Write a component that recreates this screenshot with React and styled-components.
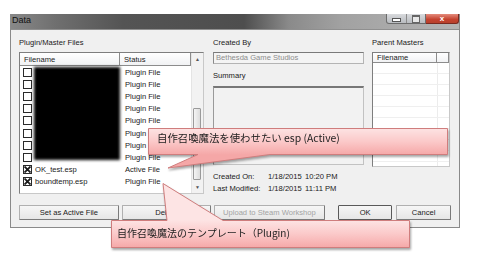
import React from "react";
import styled, { createGlobalStyle } from "styled-components";

const GlobalStyle = createGlobalStyle`
  html, body {
    margin: 0;
    background: #fff;
  }
  body {
    font-family: "Liberation Sans", Arial, sans-serif;
    font-size: 7.6px;
    color: #1a1a1a;
    -webkit-font-smoothing: antialiased;
  }
`;

const Page = styled.div`
  position: relative;
  width: 480px;
  height: 260px;
  padding: 14px 0 0 10px;
  box-sizing: border-box;
  overflow: hidden;
`;

const Window = styled.div`
  width: 450px;
  box-sizing: border-box;
  border: 1px solid #8a8a8a;
  border-top: none;
  background: #f0f0f0;
`;

const TitleBar = styled.div`
  height: 15px;
  display: flex;
  justify-content: space-between;
  align-items: flex-start;
  background: linear-gradient(
    90deg,
    #888 0%,
    #6f6f6f 10%,
    #545454 25%,
    #4e4e4e 52%,
    #8a8a8a 62%,
    #a2a2a2 74%,
    #b4b4b4 100%
  );
`;

const TitleText = styled.span`
  font-size: 9px;
  line-height: 12px;
  padding-left: 1px;
  color: #111;
`;

const Controls = styled.div`
  display: flex;
  height: 10px;
`;

const MinMax = styled.div`
  width: 40px;
  display: flex;
  border: 1px solid #6c6c6c;
  border-top: none;
  border-radius: 0 0 0 3px;
  box-sizing: border-box;
  background: linear-gradient(#d8dadd, #b9bcc0);
`;

const CtrlButton = styled.div`
  flex: 1;
  display: flex;
  align-items: center;
  justify-content: center;
  border-right: ${(p) => (p.$divider ? "1px solid #8a8a8a" : "none")};
`;

const MinGlyph = styled.div`
  width: 7px;
  height: 2px;
  margin-top: 3px;
  background: #fff;
  border: 1px solid #555;
`;

const MaxGlyph = styled.div`
  width: 6px;
  height: 5px;
  border: 1px solid #666;
  border-top-width: 2px;
  background: #e8e8e8;
`;

const Close = styled.div`
  width: 33px;
  display: flex;
  align-items: center;
  justify-content: center;
  border: 1px solid #7a2a20;
  border-top: none;
  border-left: none;
  border-radius: 0 0 3px 0;
  box-sizing: border-box;
  background: linear-gradient(#e48b7c, #c4422f 60%, #b8402c);
  color: #fff;
  font-size: 8px;
  font-weight: bold;
  line-height: 8px;
`;

const Body = styled.div`
  border-top: 1px solid #8f8f8f;
  padding: 8px 8px 7px 8px;
`;

const Columns = styled.div`
  display: flex;
  align-items: flex-start;
`;

const Column = styled.div`
  width: ${(p) => p.$w}px;
  margin-left: ${(p) => p.$gap || 0}px;
  display: flex;
  flex-direction: column;
`;

const Label = styled.div`
  line-height: 10px;
  height: 10px;
  margin-top: ${(p) => p.$mt || 0}px;
  white-space: nowrap;
`;

const ListBox = styled.div`
  position: relative;
  margin-top: 4px;
  height: ${(p) => p.$h}px;
  box-sizing: border-box;
  border: 1px solid #7e7e7e;
  border-right-color: #c8c8c8;
  border-bottom-color: #c8c8c8;
  background: #fff;
  display: flex;
  overflow: hidden;
`;

const Table = styled.div`
  flex: 1;
  display: flex;
  flex-direction: column;
`;

const HeaderRow = styled.div`
  display: flex;
  height: ${(p) => p.$h}px;
  box-sizing: border-box;
  border-bottom: 1px solid #8c8c8c;
  background: linear-gradient(#ffffff, #f1f2f4);
`;

const HeaderCell = styled.div`
  width: ${(p) => (p.$w ? `${p.$w}px` : "auto")};
  flex: ${(p) => (p.$w ? "none" : 1)};
  box-sizing: border-box;
  padding-left: 4px;
  display: flex;
  align-items: center;
  border-right: 1px solid #8c8c8c;
`;

const FileRow = styled.div`
  display: flex;
  height: 12.2px;
  align-items: center;
  color: #1a1a1a;
`;

const NameCell = styled.div`
  width: 100px;
  display: flex;
  align-items: center;
  padding-left: 3px;
  box-sizing: border-box;
  gap: 3px;
  white-space: nowrap;
`;

const StatusCell = styled.div`
  flex: 1;
  padding-left: 5px;
  white-space: nowrap;
  color: #1a1a1a;
`;

const Check = styled.div`
  width: 9px;
  height: 9px;
  box-sizing: border-box;
  border: 1px solid #2a2a2a;
  background: #fff;
  display: flex;
  flex: none;
`;

const Redaction = styled.div`
  position: absolute;
  left: 14px;
  top: 14px;
  width: 86px;
  height: 93px;
  background: #000;
  filter: blur(1.6px);
`;

const ScrollBar = styled.div`
  width: 11px;
  display: flex;
  flex-direction: column;
  background: #f2f2f2;
  border-left: 1px solid #e4e4e4;
`;

const ScrollArrow = styled.div`
  height: 12px;
  display: flex;
  align-items: center;
  justify-content: center;
  color: #555;
  font-size: 5px;
`;

const ScrollTrack = styled.div`
  flex: 1;
  padding-top: 43px;
`;

const Thumb = styled.div`
  width: 8px;
  height: 72px;
  margin-left: 1px;
  box-sizing: border-box;
  border: 1px solid #9a9a9a;
  border-radius: 1px;
  background: linear-gradient(90deg, #f4f4f4, #dcdcdc);
`;

const TextField = styled.div`
  margin-top: 4px;
  height: 12px;
  box-sizing: border-box;
  border: 1px solid #b4b4b4;
  border-top-color: #7a7a7a;
  border-left-color: #8a8a8a;
  background: #f4f4f4;
  color: #8d8d8d;
  padding-left: 2px;
  line-height: 10px;
  white-space: nowrap;
`;

const SummaryBox = styled.div`
  margin-top: 5px;
  height: 79px;
  box-sizing: border-box;
  border: 1px solid #c2c2c2;
  border-top: 2px solid #777;
  border-left-color: #9a9a9a;
  background: #f2f2f2;
`;

const InfoGrid = styled.div`
  margin-top: 6px;
  display: grid;
  grid-template-columns: 55px 37px auto;
  line-height: 12px;
  white-space: nowrap;
`;

const MasterRow = styled.div`
  display: flex;
  height: 10px;
  flex: none;
  border-bottom: 1px solid #efefef;
`;

const MasterCell = styled.div`
  width: ${(p) => (p.$w ? `${p.$w}px` : "auto")};
  flex: ${(p) => (p.$w ? "none" : 1)};
  border-right: ${(p) => (p.$w ? "1px solid #ececec" : "none")};
`;

const ButtonRow = styled.div`
  display: flex;
  margin-top: 10px;
`;

const Button = styled.div`
  width: ${(p) => p.$w}px;
  margin-left: ${(p) => p.$gap || 0}px;
  height: 15px;
  box-sizing: border-box;
  display: flex;
  align-items: center;
  justify-content: center;
  border: 1px solid ${(p) => (p.$default ? "#5a5a5a" : "#7a7a7a")};
  border-top-color: ${(p) => (p.$default ? "#5a5a5a" : "#b0b0b0")};
  border-left-color: ${(p) => (p.$default ? "#5a5a5a" : "#b0b0b0")};
  border-radius: 1px;
  background: linear-gradient(#f6f6f6, #e6e6e6);
  color: ${(p) => (p.$disabled ? "#a3a3a3" : "#1a1a1a")};
  white-space: nowrap;
`;

const CalloutWrap = styled.div`
  position: absolute;
  left: ${(p) => p.$x}px;
  top: ${(p) => p.$y}px;
  width: ${(p) => p.$w}px;
  height: ${(p) => p.$h}px;
  filter: drop-shadow(1.5px 2px 1.2px rgba(0, 0, 0, 0.35));
`;

const CalloutSvg = styled.svg`
  position: absolute;
  left: 0;
  top: 0;
`;

const CalloutText = styled.span`
  position: absolute;
  left: ${(p) => p.$tx}px;
  top: ${(p) => p.$ty}px;
  font-family: "Noto Sans CJK JP", "Noto Sans", sans-serif;
  font-size: ${(p) => p.$fs}px;
  line-height: 14px;
  color: #222;
  white-space: nowrap;
`;

const XMark = () => (
  <svg width="7" height="7" viewBox="0 0 7 7">
    <path d="M0.5 0.5 L6.5 6.5 M6.5 0.5 L0.5 6.5" stroke="#1a1a1a" strokeWidth="1.8" />
  </svg>
);

const Callout = ({ id, x, y, w, h, d, boxTop, boxBottom, tx, ty, fs, children }) => (
  <CalloutWrap $x={x} $y={y} $w={w} $h={h}>
    <CalloutSvg width={w} height={h}>
      <defs>
        <linearGradient id={id} x1="0" y1={boxTop} x2="0" y2={boxBottom} gradientUnits="userSpaceOnUse">
          <stop offset="0" stopColor="#fde4e4" />
          <stop offset="0.5" stopColor="#fbc9c9" />
          <stop offset="1" stopColor="#f5a7a7" />
        </linearGradient>
      </defs>
      <path d={d} fill={`url(#${id})`} stroke="#cf7d7d" strokeWidth="1" />
    </CalloutSvg>
    <CalloutText $tx={tx} $ty={ty} $fs={fs}>
      {children}
    </CalloutText>
  </CalloutWrap>
);

const files = [
  ...Array.from({ length: 8 }, () => ({ name: "", status: "Plugin File", checked: false })),
  { name: "OK_test.esp", status: "Active File", checked: true },
  { name: "boundtemp.esp", status: "Plugin File", checked: true },
];

export default function App() {
  return (
    <Page>
      <GlobalStyle />
      <Window>
        <TitleBar>
          <TitleText>Data</TitleText>
          <Controls>
            <MinMax>
              <CtrlButton $divider>
                <MinGlyph />
              </CtrlButton>
              <CtrlButton>
                <MaxGlyph />
              </CtrlButton>
            </MinMax>
            <Close>x</Close>
          </Controls>
        </TitleBar>
        <Body>
          <Columns>
            <Column $w={185}>
              <Label>Plugin/Master Files</Label>
              <ListBox $h={142}>
                <Table>
                  <HeaderRow $h={13}>
                    <HeaderCell $w={100}>Filename</HeaderCell>
                    <HeaderCell>Status</HeaderCell>
                  </HeaderRow>
                  {files.map((f, i) => (
                    <FileRow key={i}>
                      <NameCell>
                        <Check>{f.checked && <XMark />}</Check>
                        {f.name}
                      </NameCell>
                      <StatusCell>{f.status}</StatusCell>
                    </FileRow>
                  ))}
                </Table>
                <ScrollBar>
                  <ScrollArrow>▲</ScrollArrow>
                  <ScrollTrack>
                    <Thumb />
                  </ScrollTrack>
                  <ScrollArrow>▼</ScrollArrow>
                </ScrollBar>
                <Redaction />
              </ListBox>
            </Column>

            <Column $w={151} $gap={9}>
              <Label>Created By</Label>
              <TextField>Bethesda Game Studios</TextField>
              <Label $mt={7}>Summary</Label>
              <SummaryBox />
              <InfoGrid>
                <span>Created On:</span>
                <span>1/18/2015</span>
                <span>10:20 PM</span>
                <span>Last Modified:</span>
                <span>1/18/2015</span>
                <span>11:11 PM</span>
              </InfoGrid>
            </Column>

            <Column $w={78} $gap={8}>
              <Label>Parent Masters</Label>
              <ListBox $h={115}>
                <Table>
                  <HeaderRow $h={12}>
                    <HeaderCell $w={64}>Filename</HeaderCell>
                    <HeaderCell />
                  </HeaderRow>
                  {Array.from({ length: 10 }, (_, i) => (
                    <MasterRow key={i}>
                      <MasterCell $w={64} />
                      <MasterCell />
                    </MasterRow>
                  ))}
                </Table>
              </ListBox>
            </Column>
          </Columns>

          <ButtonRow>
            <Button $w={100}>Set as Active File</Button>
            <Button $w={89} $gap={3}>Delete</Button>
            <Button $w={112} $gap={3} $disabled>Upload to Steam Workshop</Button>
            <Button $w={54} $gap={13} $default>OK</Button>
            <Button $w={55} $gap={4}>Cancel</Button>
          </ButtonRow>
        </Body>
      </Window>

      <Callout
        id="pinkA"
        x={148}
        y={128}
        w={304}
        h={46}
        boxTop={0}
        boxBottom={27}
        d="M0.5 0.5 H299.5 V26.5 H122 L20 40 L50 26.5 H0.5 Z"
        tx={9}
        ty={3}
        fs={10.4}
      >
        自作召喚魔法を使わせたい esp (Active)
      </Callout>

      <Callout
        id="pinkB"
        x={111}
        y={183}
        w={303}
        h={70}
        boxTop={37}
        boxBottom={65}
        d="M0.5 37.5 H56 L52 0.5 L112 37.5 H298.5 V64.5 H0.5 Z"
        tx={6}
        ty={43}
        fs={10}
      >
        自作召喚魔法のテンプレート（Plugin)
      </Callout>
    </Page>
  );
}
